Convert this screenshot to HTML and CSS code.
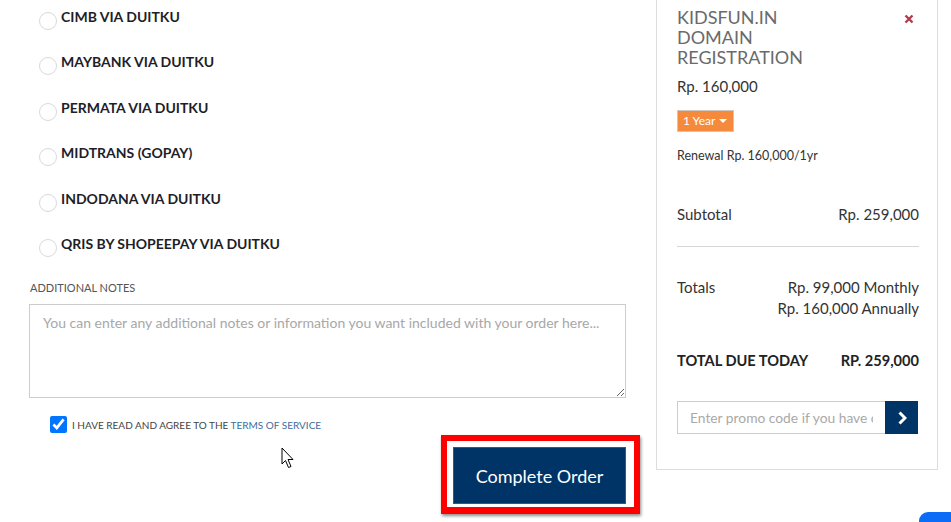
FILE: index.html
```html
<!DOCTYPE html>
<html lang="en">
<head>
<meta charset="utf-8">
<title>Checkout</title>
<link rel="stylesheet" href="styles.css">
</head>
<body>
<div class="page">
  <main class="main-col">
    <ul class="gateways">
      <li class="gateway"><span class="radio"></span><span class="gw-name">CIMB VIA DUITKU</span></li>
      <li class="gateway"><span class="radio"></span><span class="gw-name">MAYBANK VIA DUITKU</span></li>
      <li class="gateway"><span class="radio"></span><span class="gw-name">PERMATA VIA DUITKU</span></li>
      <li class="gateway"><span class="radio"></span><span class="gw-name">MIDTRANS (GOPAY)</span></li>
      <li class="gateway"><span class="radio"></span><span class="gw-name">INDODANA VIA DUITKU</span></li>
      <li class="gateway"><span class="radio"></span><span class="gw-name">QRIS BY SHOPEEPAY VIA DUITKU</span></li>
    </ul>

    <label class="notes-label" for="notes">ADDITIONAL NOTES</label>
    <textarea id="notes" class="notes" placeholder="You can enter any additional notes or information you want included with your order here..."></textarea>

    <div class="tos">
      <input type="checkbox" class="tos-check" checked>
      <span class="tos-text">I HAVE READ AND AGREE TO THE <a href="#" class="tos-link">TERMS OF SERVICE</a></span>
    </div>

    <div class="submit-row">
      <div class="highlight">
        <button class="btn-complete">Complete Order</button>
      </div>
    </div>
  </main>

  <aside class="summary">
    <div class="item-head">
      <h3 class="item-title">KIDSFUN.IN<br>DOMAIN<br>REGISTRATION</h3>
      <svg class="item-remove" width="10" height="10" viewBox="0 0 10 10" aria-label="Remove"><path d="M1.5 1.5 L8.5 8.5 M8.5 1.5 L1.5 8.5" stroke="#b03c4c" stroke-width="2.4" stroke-linecap="butt"/></svg>
    </div>
    <div class="item-price">Rp. 160,000</div>
    <button class="cycle-btn">1 Year <span class="caret"></span></button>
    <div class="renewal">Renewal Rp. 160,000/1yr</div>

    <div class="row subtotal"><span>Subtotal</span><span>Rp. 259,000</span></div>
    <hr class="divider">
    <div class="row totals"><span>Totals</span><span class="right">Rp. 99,000 Monthly<br>Rp. 160,000 Annually</span></div>
    <div class="row due"><span>TOTAL DUE TODAY</span><span>RP. 259,000</span></div>

    <div class="promo">
      <input class="promo-input" type="text" placeholder="Enter promo code if you have one">
      <button class="promo-btn" aria-label="Apply">
        <svg width="10" height="14" viewBox="0 0 10 14"><path d="M2.5 1.5 L8 7 L2.5 12.5" fill="none" stroke="#fff" stroke-width="3"/></svg>
      </button>
    </div>
  </aside>
</div>

<svg class="cursor" width="14" height="22" viewBox="0 0 14 22"><path d="M1 1 L1 17 L4.5 13.5 L7.5 20.5 L10 19.5 L7 12.5 L12 12.5 Z" fill="#fff" stroke="#000" stroke-width="1" stroke-linejoin="round"/></svg>
<div class="chat-tab"></div>
</body>
</html>
```

FILE: styles.css
```css
* { box-sizing: border-box; }
html, body { margin: 0; padding: 0; background: #fff; }
body {
  font-family: Lato, "Open Sans", Arial, sans-serif;
  color: #333;
  overflow: hidden;
  height: 522px;
}
.page {
  display: flex;
  align-items: flex-start;
  margin-top: -20px;
  padding-left: 29px;
}
.main-col {
  width: 597px;
  padding-top: 26.6px;
}
.gateways {
  list-style: none;
  margin: 0;
  padding: 0 0 0 10px;
}
.gateway {
  display: flex;
  align-items: flex-start;
  height: 45.5px;
  font-size: 14px;
  line-height: 20px;
  font-weight: 700;
  color: #1e1e28;
}
.radio {
  width: 18px;
  height: 18px;
  border: 1px solid #d9d9d9;
  border-radius: 50%;
  margin-top: 5px;
  margin-right: 4px;
  flex: none;
  background: #fff;
}
.notes-label {
  display: block;
  margin-top: 0;
  font-size: 11px;
  line-height: 16px;
  color: #555;
  padding-left: 1px;
}
.notes {
  display: block;
  width: 597px;
  height: 94px;
  margin-top: 8.5px;
  border: 1px solid #ccc;
  padding: 8px 13px;
  font-family: Lato, Arial, sans-serif;
  font-size: 14px;
  line-height: 20px;
  resize: vertical;
  color: #555;
}
.notes::placeholder { color: #a8a8a8; }
.tos {
  display: flex;
  align-items: center;
  margin-top: 18px;
  padding-left: 21px;
}
.tos-check {
  width: 17px;
  height: 17px;
  margin: 0 5px 0 0;
  accent-color: #0075ff;
}
.tos-text {
  font-size: 10px;
  color: #444;
}
.tos-link { color: #3d6c9e; text-decoration: none; }
.submit-row {
  display: flex;
  justify-content: flex-end;
  margin-top: 2px;
  margin-right: -14px;
}
.highlight {
  border: 6px solid #f00;
  border-bottom-width: 7px;
  padding: 6px 8px 3px 6px;
  box-shadow: 1px 2px 3px rgba(0,0,0,0.45);
  background: #fff;
}
.btn-complete {
  display: block;
  width: 173px;
  height: 57px;
  background: #003366;
  border: 1px solid #2d5a8a;
  color: #fff;
  font-family: Lato, Arial, sans-serif;
  font-size: 18px;
  padding: 0;
  cursor: pointer;
}

.summary {
  margin-left: 30px;
  width: 282px;
  border: 1px solid #ddd;
  padding: 25.7px 18px 35px 20px;
}
.item-head {
  display: flex;
  justify-content: space-between;
  align-items: flex-start;
}
.item-title {
  margin: 0;
  font-size: 18px;
  line-height: 20px;
  font-weight: 400;
  color: #6a6a6a;
}
.item-remove {
  margin-top: 7px;
  margin-right: 5px;
  flex: none;
}
.item-price {
  margin-top: 9.7px;
  font-size: 15px;
  line-height: 21px;
  color: #333;
}
.cycle-btn {
  display: inline-flex;
  align-items: center;
  gap: 4px;
  margin-top: 12.5px;
  height: 22px;
  padding: 0 6px 0 5px;
  background: #f58a3c;
  border: 1px solid #cfc6bf;
  color: #fff;
  font-family: Lato, Arial, sans-serif;
  font-size: 12px;
  font-weight: 400;
}
.caret {
  width: 0; height: 0;
  border-left: 4px solid transparent;
  border-right: 4px solid transparent;
  border-top: 4px solid #fff;
}
.renewal {
  margin-top: 15.5px;
  font-size: 12.5px;
  line-height: 17px;
  color: #333;
}
.row {
  display: flex;
  justify-content: space-between;
  font-size: 15px;
  line-height: 21px;
  color: #333;
}
.row .right { text-align: right; }
.subtotal { margin-top: 39.5px; }
.divider {
  border: 0;
  border-top: 1px solid #d6d6d6;
  margin: 21px 0 0;
}
.totals { margin-top: 30px; }
.due {
  margin-top: 31px;
  font-weight: 700;
  font-size: 14.6px;
  color: #222;
}
.promo {
  display: flex;
  margin-top: 30.3px;
}
.promo-input {
  width: 208px;
  height: 33px;
  border: 1px solid #ccc;
  border-right: 0;
  padding: 0 12px;
  font-family: Lato, Arial, sans-serif;
  font-size: 13.8px;
}
.promo-input::placeholder { color: #a9a9a9; }
.promo-btn {
  width: 33px;
  height: 33px;
  background: #003366;
  border: 0;
  display: flex;
  align-items: center;
  justify-content: center;
  padding: 0;
}
.cursor {
  position: absolute;
  left: 281px;
  top: 447px;
}
.chat-tab {
  position: fixed;
  right: 0;
  bottom: 0;
  width: 32px;
  height: 10px;
  background: #0a6cf7;
  border-top-left-radius: 9px;
}
```
